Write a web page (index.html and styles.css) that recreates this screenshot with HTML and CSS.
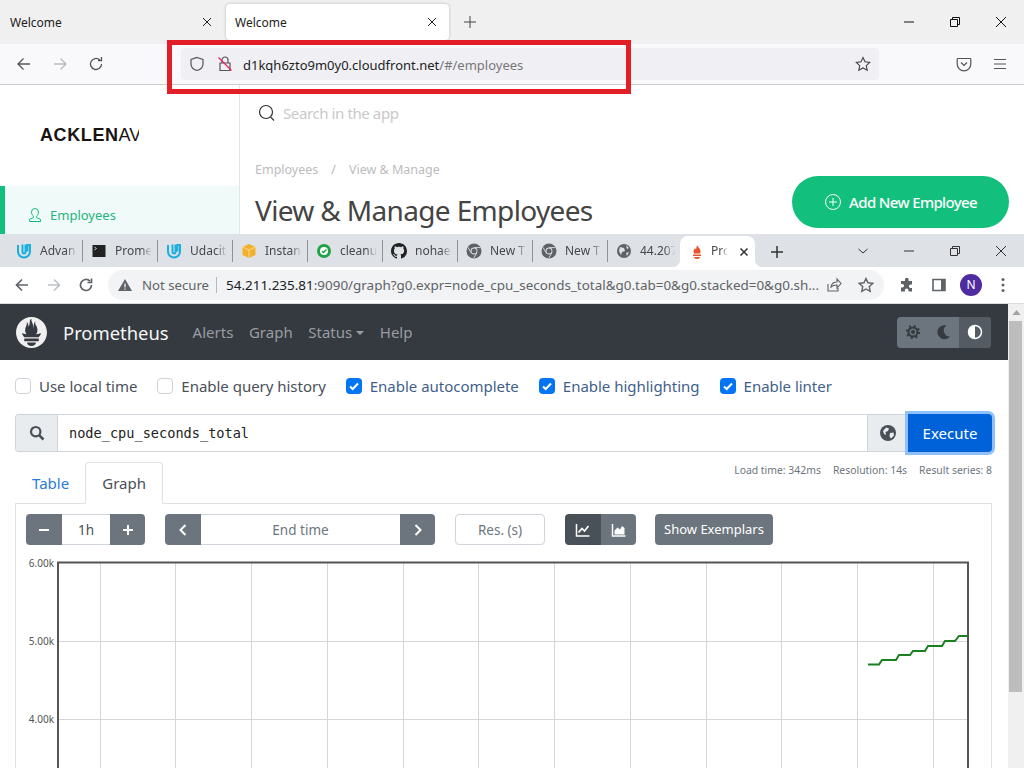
FILE: index.html
```html
<!DOCTYPE html>
<html lang="en">
<head>
    <meta charset="UTF-8">
    <meta name="viewport" content="width=device-width, initial-scale=1.0">
    <title>Prometheus Time Series Collection and Processing Server</title>
    <link rel="stylesheet" href="styles.css">
</head>
<body>
    <!-- top window: firefox -->
    <section class="ff">
        <div class="ff-tabs">
            <div class="ff-tab">
                <span>Welcome</span>
                <svg class="ico12" viewBox="0 0 12 12"><path d="M2 2l8 8M10 2l-8 8" stroke="#222" fill="none"/></svg>
            </div>
            <div class="ff-tab ff-tab-active">
                <span>Welcome</span>
                <svg class="ico12" viewBox="0 0 12 12"><path d="M2 2l8 8M10 2l-8 8" stroke="#222" fill="none"/></svg>
            </div>
            <svg class="ff-plus" viewBox="0 0 14 14"><path d="M7 1v12M1 7h12" stroke="#444" fill="none"/></svg>
            <div class="win-btns">
                <svg viewBox="0 0 12 12"><path d="M1 6h10" stroke="#111" fill="none"/></svg>
                <svg viewBox="0 0 12 12"><path d="M1.500 3.500h7v7h-7zM3.500 3.500v-2h7v7h-2" stroke="#111" fill="none"/></svg>
                <svg viewBox="0 0 12 12"><path d="M1 1l10 10M11 1l-10 10" stroke="#111" fill="none"/></svg>
            </div>
        </div>
        <div class="ff-bar">
            <svg class="ff-nav" viewBox="0 0 16 16"><path d="M14 8H2M7.500 2.500L2 8l5.500 5.500" stroke="#555" stroke-width="1.300" fill="none"/></svg>
            <svg class="ff-nav" viewBox="0 0 16 16"><path d="M2 8h12M8.500 2.500L14 8l-5.500 5.500" stroke="#bbb" stroke-width="1.300" fill="none"/></svg>
            <svg class="ff-nav" viewBox="0 0 16 16"><path d="M13.500 8a5.500 5.500 0 1 1-1.700-4M13.500 1v3.500H10" stroke="#555" stroke-width="1.300" fill="none"/></svg>
            <div class="ff-url">
                <svg class="ico16" viewBox="0 0 16 16"><path d="M8 1.500l6 2v4.500c0 3-2.500 5.500-6 6.500-3.500-1-6-3.500-6-6.500V3.500z" stroke="#555" stroke-width="1.200" fill="none"/></svg>
                <svg class="ico16" viewBox="0 0 16 16"><path d="M3 7h10v7.500H3zM5 7V4a3 3 0 0 1 6 0v3" stroke="#555" stroke-width="1.200" fill="none"/><path d="M1.500 1.500l13 13" stroke="#e0245e" stroke-width="1.200"/></svg>
                <span class="ff-url-text">d1kqh6zto9m0y0.cloudfront.net<span class="ff-url-path">/#/employees</span></span>
                <svg class="ff-star" viewBox="0 0 16 16"><path d="M8 1.500l2 4.300 4.700.6-3.400 3.200.9 4.700L8 12l-4.200 2.300.9-4.700L1.300 6.400 6 5.800z" stroke="#444" stroke-width="1.100" fill="none"/></svg>
            </div>
            <svg class="ff-pocket" viewBox="0 0 16 16"><path d="M2 2.500h12a.8.8 0 0 1 .8.800V8a6.800 6.800 0 0 1-13.600 0V3.300A.8.8 0 0 1 2 2.500z" stroke="#555" stroke-width="1.200" fill="none"/><path d="M5 6.500L8 9.500l3-3" stroke="#555" stroke-width="1.200" fill="none"/></svg>
            <svg class="ff-menu" viewBox="0 0 16 16"><path d="M2 3.500h12M2 8h12M2 12.500h12" stroke="#555" stroke-width="1.200" fill="none"/></svg>
        </div>
        <div class="app">
            <aside class="app-side">
                <div class="app-logo"><div class="app-logo-clip"><b>ACKLEN</b><span>AV</span></div></div>
                <div class="app-nav-item">
                    <svg class="ico16" viewBox="0 0 16 16"><path d="M8 1.500a3.500 3.500 0 0 1 3.500 3.500c0 2-1 3.500-2 4.200v1.300l4 1.800v2.200H2.500v-2.200l4-1.800V9.200c-1-.7-2-2.200-2-4.200A3.500 3.500 0 0 1 8 1.500z" stroke="#13bf7c" fill="none"/></svg>
                    <span>Employees</span>
                </div>
            </aside>
            <div class="app-main">
                <div class="app-search">
                    <svg class="ico18" viewBox="0 0 18 18"><circle cx="8" cy="8" r="6.500" stroke="#333" stroke-width="1.200" fill="none"/><path d="M12.500 12.800L16 16.500" stroke="#333" stroke-width="1.200"/></svg>
                    <span>Search in the app</span>
                </div>
                <div class="crumbs"><span>Employees</span><span>/</span><span>View &amp; Manage</span></div>
                <div class="app-head">
                    <h1>View &amp; Manage Employees</h1>
                    <div class="add-btn">
                        <svg class="ico18" viewBox="0 0 18 18"><circle cx="9" cy="9" r="7.500" stroke="#fff" fill="none"/><path d="M9 5v8M5 9h8" stroke="#fff" fill="none"/></svg>
                        <span>Add New Employee</span>
                    </div>
                </div>
            </div>
        </div>
    </section>

    <!-- red annotation drawn on the screenshot -->
    <div class="red-box"></div>

    <!-- bottom window: chrome -->
    <section class="cr">
        <div class="cr-tabs">
            <div class="cr-tab"><svg class="fav" viewBox="0 0 16 16"><path d="M2 2v6.500a6 6 0 0 0 12 0V2h-2.500v6.500M6.500 1.500V9a1.500 1.500 0 0 0 3 0V1.500" stroke="#1daee0" stroke-width="2" fill="none"/></svg><span class="cr-tab-txt">Advan</span></div>
            <div class="cr-tab"><svg class="fav" viewBox="0 0 16 16"><rect x="1.500" y="2" width="13" height="12" fill="#222"/><path d="M3.500 4l2 1.500-2 1.500" stroke="#ccc" fill="none"/></svg><span class="cr-tab-txt">Prome</span></div>
            <div class="cr-tab"><svg class="fav" viewBox="0 0 16 16"><path d="M2 2v6.500a6 6 0 0 0 12 0V2h-2.500v6.500M6.500 1.500V9a1.500 1.500 0 0 0 3 0V1.500" stroke="#1daee0" stroke-width="2" fill="none"/></svg><span class="cr-tab-txt">Udacit</span></div>
            <div class="cr-tab"><svg class="fav" viewBox="0 0 16 16"><path d="M8 1l6.500 3v8L8 15l-6.500-3V4z" fill="#f3b02c"/><path d="M1.500 4L8 7l6.500-3M8 7v8" stroke="#fbd98a" fill="none"/></svg><span class="cr-tab-txt">Instanc</span></div>
            <div class="cr-tab"><svg class="fav" viewBox="0 0 16 16"><circle cx="8" cy="8" r="7" fill="#1fa24a"/><circle cx="8" cy="8" r="4" fill="#fff"/><path d="M6 8l1.500 1.500L10.500 6.500" stroke="#1fa24a" stroke-width="1.500" fill="none"/></svg><span class="cr-tab-txt">cleanu</span></div>
            <div class="cr-tab"><svg class="fav" viewBox="0 0 16 16"><path fill="#222" d="M8 0C3.580 0 0 3.580 0 8c0 3.540 2.290 6.530 5.470 7.590.4.070.55-.17.55-.38 0-.19-.01-.82-.01-1.490-2.010.37-2.530-.49-2.690-.94-.09-.23-.48-.94-.82-1.130-.28-.15-.68-.52-.01-.53.63-.01 1.080.58 1.230.82.720 1.210 1.870.87 2.330.66.070-.52.280-.87.510-1.070-1.780-.2-3.640-.89-3.640-3.950 0-.87.310-1.590.82-2.150-.08-.2-.36-1.020.08-2.120 0 0 .67-.21 2.200.82.640-.18 1.320-.27 2-.27s1.360.09 2 .27c1.530-1.040 2.200-.82 2.200-.82.440 1.100.16 1.920.08 2.120.51.560.82 1.270.82 2.150 0 3.070-1.870 3.750-3.650 3.950.29.250.54.730.54 1.480 0 1.070-.01 1.930-.01 2.200 0 .21.150.46.550.38A8.010 8.010 0 0 0 16 8c0-4.420-3.580-8-8-8z"/></svg><span class="cr-tab-txt">nohael</span></div>
            <div class="cr-tab"><svg class="fav" viewBox="0 0 16 16"><circle cx="8" cy="8" r="7.500" fill="#5f6368"/><path d="M8 4.600h6.200M5.100 9.700L2 4.300M10.900 9.700L7.800 15" stroke="#dee1e6" stroke-width=".9" fill="none"/><circle cx="8" cy="8" r="3.400" fill="#dee1e6"/><circle cx="8" cy="8" r="2.500" fill="#5f6368"/></svg><span class="cr-tab-txt">New T</span></div>
            <div class="cr-tab"><svg class="fav" viewBox="0 0 16 16"><circle cx="8" cy="8" r="7.500" fill="#5f6368"/><path d="M8 4.600h6.200M5.100 9.700L2 4.300M10.900 9.700L7.800 15" stroke="#dee1e6" stroke-width=".9" fill="none"/><circle cx="8" cy="8" r="3.400" fill="#dee1e6"/><circle cx="8" cy="8" r="2.500" fill="#5f6368"/></svg><span class="cr-tab-txt">New T</span></div>
            <div class="cr-tab cr-tab-last"><svg class="fav" viewBox="0 0 16 16"><circle cx="8" cy="8" r="7" fill="#5f6368"/><path d="M4 4l4 1 1 3-3 1-1 3-2-4zM10 2l3 3-2 1zM10 10l3-1-2 4z" fill="#dee1e6"/></svg><span class="cr-tab-txt">44.207</span></div>
            <div class="cr-tab-active">
                <svg class="fav" viewBox="0 0 16 16"><path d="M8 1c.5 2 3.500 3 3.500 6.500 0 .8-.2 1.400-.5 2H5c-.3-.6-.5-1.200-.5-2C4.500 6 5.500 5 6 4c.3.800.7 1.200 1 1.500C7.500 4 7.500 2.500 8 1z" fill="#e6522c"/><path d="M4 10.500h8v1.500H4zM5 13h6c0 1-1.300 2-3 2s-3-1-3-2z" fill="#e6522c"/></svg>
                <span class="cr-tab-txt cr-tab-txt-short">Pro</span>
                <svg class="ico12 cr-close" viewBox="0 0 12 12"><path d="M2.500 2.500l7 7M9.500 2.500l-7 7" stroke="#333" stroke-width="1.500" fill="none"/></svg>
            </div>
            <svg class="cr-plus" viewBox="0 0 14 14"><path d="M7 1v12M1 7h12" stroke="#333" stroke-width="1.500" fill="none"/></svg>
            <div class="cr-win">
                <svg viewBox="0 0 12 12"><path d="M1.500 4l4.500 4 4.500-4" stroke="#333" fill="none"/></svg>
                <svg viewBox="0 0 12 12"><path d="M1 6h10" stroke="#333" fill="none"/></svg>
                <svg viewBox="0 0 12 12"><path d="M1.500 3.500h7v7h-7zM3.500 3.500v-2h7v7h-2" stroke="#333" fill="none"/></svg>
                <svg viewBox="0 0 12 12"><path d="M1 1l10 10M11 1l-10 10" stroke="#333" fill="none"/></svg>
            </div>
        </div>
        <div class="cr-bar">
            <svg class="cr-nav" viewBox="0 0 16 16"><path d="M14 8H2.500M8 2.500L2.500 8 8 13.500" stroke="#5f6368" stroke-width="1.700" fill="none"/></svg>
            <svg class="cr-nav" viewBox="0 0 16 16"><path d="M2 8h11.500M8 2.500L13.500 8 8 13.500" stroke="#bdc1c6" stroke-width="1.700" fill="none"/></svg>
            <svg class="cr-nav" viewBox="0 0 16 16"><path d="M13.500 8a5.500 5.500 0 1 1-1.600-3.900M13.500 1.500v4h-4" stroke="#5f6368" stroke-width="1.700" fill="none"/></svg>
            <div class="omni">
                <svg class="ico16" viewBox="0 0 16 16"><path d="M8 2l7 12H1z" fill="#5f6368"/><path d="M8 6.500v4M8 11.500v1.200" stroke="#fff" stroke-width="1.200"/></svg>
                <span class="omni-warn">Not secure</span>
                <span class="omni-sep"></span>
                <span class="omni-url"><span class="omni-host">54.211.235.81</span>:9090/graph?g0.expr=node_cpu_seconds_total&amp;g0.tab=0&amp;g0.stacked=0&amp;g0.sh...</span>
                <svg class="omni-share" viewBox="0 0 16 16"><path d="M2 7v7h10v-3M5 10c.5-3 3-5 6-5V2l4 4.500L11 11V8c-2.500 0-4.500.5-6 2z" stroke="#5f6368" stroke-width="1.100" fill="none"/></svg>
                <svg class="omni-star" viewBox="0 0 16 16"><path d="M8 1.500l2 4.300 4.700.6-3.400 3.200.9 4.700L8 12l-4.200 2.300.9-4.700L1.300 6.400 6 5.800z" stroke="#5f6368" stroke-width="1.400" fill="none"/></svg>
            </div>
            <svg class="cr-ext" viewBox="0 0 16 16"><path d="M6 2.500a1.800 1.800 0 0 1 3.600 0V4H13v3.400h-1.300a1.800 1.800 0 0 0 0 3.600H13v3.500H9.500v-1.300a1.800 1.800 0 0 0-3.600 0v1.300H2v-4h1.300a1.800 1.800 0 0 0 0-3.600H2V4h4z" fill="#5f6368"/></svg>
            <svg class="cr-panel" viewBox="0 0 16 16"><path d="M2 2.500h12v11H2z" stroke="#5f6368" stroke-width="1.600" fill="none"/><path d="M10 2.500h4v11h-4z" fill="#5f6368"/></svg>
            <div class="avatar">N</div>
            <svg class="cr-dots" viewBox="0 0 4 16"><circle cx="2" cy="2.500" r="1.500" fill="#5f6368"/><circle cx="2" cy="8" r="1.500" fill="#5f6368"/><circle cx="2" cy="13.500" r="1.500" fill="#5f6368"/></svg>
        </div>
        <div class="cr-page">
            <div class="prom">
                <nav class="prom-nav">
                    <svg class="prom-logo" viewBox="0 0 24 24"><path fill="#f0f0f0" d="M12 0C5.373 0 0 5.372 0 12s5.373 12 12 12 12-5.373 12-12S18.627 0 12 0zm0 22.460c-1.885 0-3.414-1.260-3.414-2.814h6.828c0 1.553-1.528 2.813-3.414 2.813zm5.640-3.745H6.360v-2.046h11.280v2.046zm-.040-3.098H6.391c-.037-.043-.075-.086-.111-.130-1.155-1.401-1.427-2.133-1.690-2.879-.005-.025 1.400.287 2.395.511 0 0 .513.119 1.262.255-.720-.843-1.147-1.915-1.147-3.010 0-2.406 1.845-4.508 1.180-6.207.648.053 1.340 1.367 1.387 3.422.689-.951.977-2.690.977-3.755 0-1.103.727-2.385 1.454-2.429-.648 1.069.168 1.985.894 4.257.272.854.237 2.290.447 3.201.070-1.892.395-4.652 1.595-5.605-.529 1.200.079 2.702.494 3.424.671 1.164 1.078 2.047 1.078 3.716a4.642 4.642 0 0 1-1.110 2.996c.792-.149 1.340-.283 1.340-.283l2.573-.502s-.374 1.538-1.810 3.019z"/></svg>
                    <span class="prom-brand">Prometheus</span>
                    <a class="prom-link">Alerts</a>
                    <a class="prom-link">Graph</a>
                    <a class="prom-link">Status<i class="caret"></i></a>
                    <a class="prom-link">Help</a>
                    <div class="theme">
                        <span class="theme-btn"><svg class="ico16" viewBox="0 0 16 16"><circle cx="8" cy="8" r="4.500" stroke="#343a40" stroke-width="2" fill="none"/><circle cx="8" cy="8" r="6.200" stroke="#343a40" stroke-width="1.800" stroke-dasharray="2 2.870" fill="none"/><circle cx="8" cy="8" r="2" fill="#343a40"/></svg></span>
                        <span class="theme-btn"><svg class="ico16" viewBox="0 0 16 16"><path d="M10.500 1.500A7 7 0 1 0 14 12.500 6 6 0 0 1 10.500 1.500z" fill="#343a40"/></svg></span>
                        <span class="theme-btn theme-on"><svg class="ico16" viewBox="0 0 16 16"><circle cx="8" cy="8" r="6.500" stroke="#fff" stroke-width="1.500" fill="none"/><path d="M8 1.500a6.500 6.500 0 0 0 0 13z" fill="#fff"/></svg></span>
                    </div>
                </nav>
                <main class="prom-main">
                    <div class="opts">
                        <label class="opt"><span class="box"></span>Use local time</label>
                        <label class="opt"><span class="box"></span>Enable query history</label>
                        <label class="opt opt-on"><span class="box box-on"><svg viewBox="0 0 16 16"><path d="M4 8.500l2.700 2.500L12 5.500" stroke="#fff" stroke-width="2" fill="none"/></svg></span>Enable autocomplete</label>
                        <label class="opt opt-on"><span class="box box-on"><svg viewBox="0 0 16 16"><path d="M4 8.500l2.700 2.500L12 5.500" stroke="#fff" stroke-width="2" fill="none"/></svg></span>Enable highlighting</label>
                        <label class="opt opt-on"><span class="box box-on"><svg viewBox="0 0 16 16"><path d="M4 8.500l2.700 2.500L12 5.500" stroke="#fff" stroke-width="2" fill="none"/></svg></span>Enable linter</label>
                    </div>
                    <div class="query">
                        <span class="addon addon-l"><svg class="ico16" viewBox="0 0 16 16"><circle cx="6.700" cy="6.700" r="4.700" stroke="#495057" stroke-width="2.200" fill="none"/><path d="M10.300 10.300l4.200 4.200" stroke="#495057" stroke-width="2.600"/></svg></span>
                        <span class="query-text">node_cpu_seconds_total</span>
                        <span class="addon addon-r"><svg class="ico16" viewBox="0 0 16 16"><circle cx="8" cy="8" r="8" fill="#495057"/><path d="M3 6l3-3.500 3 1-1 2.500-2.500 1 .5 3-2-1zM10 8l3.500-.5.500 3-3 3-1.500-2z" fill="#e9ecef"/></svg></span>
                        <span class="exec">Execute</span>
                    </div>
                    <div class="tabs-row">
                        <div class="tab-link">Table</div>
                        <div class="tab-on">Graph</div>
                        <div class="stats">
                            <span>Load time: 342ms</span>
                            <span>Resolution: 14s</span>
                            <span>Result series: 8</span>
                        </div>
                    </div>
                    <div class="panel">
                        <div class="controls">
                            <div class="grp">
                                <span class="gbtn gbtn-l"><svg class="ico12" viewBox="0 0 12 12"><path d="M1 6h10" stroke="#fff" stroke-width="2"/></svg></span>
                                <span class="gfield gfield-range">1h</span>
                                <span class="gbtn gbtn-r"><svg class="ico12" viewBox="0 0 12 12"><path d="M1 6h10M6 1v10" stroke="#fff" stroke-width="2"/></svg></span>
                            </div>
                            <div class="grp">
                                <span class="gbtn gbtn-l"><svg class="ico12" viewBox="0 0 12 12"><path d="M8.500 1L3.500 6l5 5" stroke="#fff" stroke-width="2" fill="none"/></svg></span>
                                <span class="gfield gfield-time">End time</span>
                                <span class="gbtn gbtn-r"><svg class="ico12" viewBox="0 0 12 12"><path d="M3.500 1l5 5-5 5" stroke="#fff" stroke-width="2" fill="none"/></svg></span>
                            </div>
                            <span class="res">Res. (s)</span>
                            <div class="grp">
                                <span class="gbtn gbtn-l gbtn-dark"><svg class="ico16" viewBox="0 0 16 16"><path d="M1.500 2v12h13" stroke="#fff" stroke-width="1.500" fill="none"/><path d="M3.500 10.500l3.500-4 2.500 2.500 4-5" stroke="#fff" stroke-width="1.700" fill="none"/></svg></span>
                                <span class="gbtn gbtn-r"><svg class="ico16" viewBox="0 0 16 16"><path d="M1.500 2v12h13" stroke="#fff" stroke-width="1.500" fill="none"/><path d="M3.500 12.500v-4l3-3 2.500 2 2-3.500 2.500 2v6.500z" fill="#fff"/></svg></span>
                            </div>
                            <span class="exemplars">Show Exemplars</span>
                        </div>
                        <svg class="graph" viewBox="16 546 975 222">
                            <g class="grid">
                                <path d="M100.500 562V768M175.500 562V768M251.500 562V768M327.500 562V768M403.500 562V768M478.500 562V768M554.500 562V768M630.500 562V768M706.500 562V768M781.500 562V768M857.500 562V768M933.500 562V768"/>
                                <path d="M58 641.500H968M58 719.500H968"/>
                            </g>
                            <path class="plot-frame" d="M58 768V562.500H968V768"/>
                            <path class="series" d="M868 664.500H879L882 660H896L899 655H910L913 651H925L928 646H942L945 641H955L959 636H968"/>
                            <text class="tick" x="54" y="567" text-anchor="end">6.00k</text>
                            <text class="tick" x="54" y="645" text-anchor="end">5.00k</text>
                            <text class="tick" x="54" y="723" text-anchor="end">4.00k</text>
                        </svg>
                    </div>
                </main>
            </div>
            <div class="scroll">
                <svg class="scroll-arrow" viewBox="0 0 10 6"><path d="M5 0l5 6H0z" fill="#a3a3a3"/></svg>
                <div class="scroll-thumb"></div>
            </div>
        </div>
    </section>
</body>
</html>
```

FILE: styles.css
```css
html, body {
    margin: 0;
    padding: 0;
}
body {
    width: 1024px;
    height: 768px;
    overflow: hidden;
    position: relative;
    background-color: #fff;
    font-family: "Noto Sans", "Open Sans", sans-serif;
    color: #333;
}
svg {
    display: block;
    flex: none;
}
.ico12 {
    width: 12px;
    height: 12px;
}
.ico16 {
    width: 16px;
    height: 16px;
}
.ico18 {
    width: 18px;
    height: 18px;
}

/* firefox window */
.ff {
    height: 234px;
    overflow: hidden;
}
.ff-tabs {
    height: 44px;
    display: flex;
    align-items: center;
    background-color: #f0f0f0;
    font-size: 12px;
    color: #222;
}
.ff-tab {
    width: 216px;
    height: 36px;
    margin-right: 10px;
    padding: 0 10px;
    display: flex;
    align-items: center;
    justify-content: space-between;
    box-sizing: border-box;
}
.ff-tab .ico12 {
    margin-right: -7px;
}
.ff-tab-active {
    width: 223px;
    margin: 0;
    padding: 0 11px 0 9px;
    background-color: #fff;
    border-radius: 4px;
    box-shadow: 0 0 3px rgba(0, 0, 0, 0.25);
}
.ff-tab-active .ico12 {
    margin-right: 0;
}
.ff-plus {
    width: 14px;
    height: 14px;
    margin-left: 14px;
}
.win-btns {
    margin-left: auto;
    display: flex;
    gap: 34px;
    padding-right: 17px;
}
.win-btns svg {
    width: 12px;
    height: 12px;
}
.ff-bar {
    height: 40px;
    display: flex;
    align-items: center;
    background-color: #f9f9fb;
    border-bottom: 1px solid #ccc;
    padding-left: 16px;
}
.ff-nav {
    width: 16px;
    height: 16px;
    margin-right: 20px;
}
.ff-url {
    width: 698px;
    height: 32px;
    margin-left: 57px;
    padding: 0 8px;
    box-sizing: border-box;
    display: flex;
    align-items: center;
    background-color: #f0f0f4;
    border-radius: 4px;
    font-size: 13px;
    color: #222;
}
.ff-url .ico16 {
    margin-right: 12px;
}
.ff-url-text {
    margin: 2px 0 0 -2px;
}
.ff-url-path {
    color: #777;
}
.ff-star {
    width: 16px;
    height: 16px;
    margin-left: auto;
}
.ff-pocket {
    width: 16px;
    height: 16px;
    margin-left: 77px;
}
.ff-menu {
    width: 16px;
    height: 16px;
    margin-left: 20px;
}

/* employees app */
.app {
    display: flex;
    height: 149px;
}
.app-side {
    width: 240px;
    flex: none;
    box-sizing: border-box;
    border-right: 1px solid #e4e4e4;
}
.app-logo {
    height: 101px;
    padding-left: 40px;
    display: flex;
    align-items: center;
}
.app-logo-clip {
    width: 99px;
    overflow: hidden;
    white-space: nowrap;
    font-size: 18px;
    color: #1a1311;
    font-family: "Liberation Sans", sans-serif;
}
.app-logo-clip b {
    letter-spacing: 0.600px;
}
.app-logo-clip span {
    font-weight: 400;
}
.app-nav-item {
    height: 48px;
    padding: 10px 0 0 22px;
    box-sizing: border-box;
    display: flex;
    align-items: center;
    gap: 7px;
    background-color: #f0faf8;
    border-left: 5px solid #13bf7c;
    font-size: 13px;
    color: #1fb57c;
}
.app-main {
    flex: 1;
    padding: 0 15px;
}
.app-search {
    height: 56px;
    padding-left: 3px;
    display: flex;
    align-items: center;
    gap: 7px;
    font-size: 15px;
    letter-spacing: -0.400px;
    color: #c9c9c9;
}
.crumbs {
    margin-top: 17px;
    display: flex;
    gap: 13px;
    font-size: 12.500px;
    line-height: 24px;
    color: #bcbcbc;
}
.app-head {
    display: flex;
    align-items: flex-start;
    justify-content: space-between;
}
h1 {
    margin: 8px 0 0;
    font-size: 28px;
    font-weight: 400;
    letter-spacing: -0.650px;
    line-height: 40px;
    color: #444;
}
.add-btn {
    width: 217px;
    height: 52px;
    margin-top: -6px;
    display: flex;
    align-items: center;
    justify-content: center;
    gap: 7px;
    box-sizing: border-box;
    background-color: #13bf7c;
    border-radius: 26px;
    font-size: 15px;
    font-weight: 500;
    letter-spacing: -0.650px;
    color: #fff;
}

/* red annotation */
.red-box {
    position: absolute;
    left: 167px;
    top: 40px;
    width: 464px;
    height: 54px;
    box-sizing: border-box;
    border: 5px solid #e21f26;
}

/* chrome window */
.cr {
    height: 534px;
    display: flex;
    flex-direction: column;
}
.cr-tabs {
    height: 33px;
    padding-left: 8px;
    display: flex;
    align-items: flex-end;
    background-color: #dee1e6;
    font-size: 12px;
    color: #45494e;
}
.cr-tab {
    width: 75px;
    height: 22px;
    margin-bottom: 5px;
    padding-left: 8px;
    box-sizing: border-box;
    display: flex;
    align-items: center;
    gap: 8px;
    border-right: 1px solid #8f9296;
}
.cr-tab-last {
    border-right: 0;
    width: 72px;
}
.fav {
    width: 16px;
    height: 16px;
}
.cr-tab-txt {
    width: 42px;
    margin-top: -2px;
    overflow: hidden;
    white-space: nowrap;
    -webkit-mask-image: linear-gradient(to right, #000 62%, transparent 88%);
    mask-image: linear-gradient(to right, #000 62%, transparent 88%);
}
.cr-tab-txt-short {
    width: 20px;
    -webkit-mask-image: linear-gradient(to right, #000 50%, transparent 85%);
    mask-image: linear-gradient(to right, #000 50%, transparent 85%);
}
.cr-tab-active {
    width: 75px;
    height: 31px;
    padding-left: 9px;
    box-sizing: border-box;
    display: flex;
    align-items: center;
    gap: 6px;
    background-color: #fff;
    border-radius: 8px 8px 0 0;
    position: relative;
}
.cr-tab-active::before,
.cr-tab-active::after {
    content: "";
    position: absolute;
    bottom: 0;
    width: 8px;
    height: 8px;
}
.cr-tab-active::before {
    left: -8px;
    background: radial-gradient(circle at 0 0, transparent 8px, #fff 8.500px);
}
.cr-tab-active::after {
    right: -8px;
    background: radial-gradient(circle at 100% 0, transparent 8px, #fff 8.500px);
}
.cr-close {
    margin-left: 1px;
}
.cr-plus {
    width: 14px;
    height: 14px;
    margin: 0 0 8px 15px;
}
.cr-win {
    margin: 0 17px 0 auto;
    align-self: center;
    display: flex;
    gap: 34px;
}
.cr-win svg {
    width: 12px;
    height: 12px;
}
.cr-bar {
    height: 37px;
    flex: none;
    box-sizing: border-box;
    padding-left: 14px;
    display: flex;
    align-items: center;
    background-color: #fff;
    border-bottom: 1px solid #dadce0;
}
.cr-nav {
    width: 16px;
    height: 16px;
    margin-right: 16px;
}
.omni {
    width: 776px;
    height: 30px;
    margin-left: -2px;
    padding: 0 10px 0 9px;
    box-sizing: border-box;
    display: flex;
    align-items: center;
    background-color: #f1f3f4;
    border-radius: 15px;
    font-size: 13.450px;
    color: #5f6368;
    white-space: nowrap;
}
.omni-warn {
    margin-left: 9px;
    font-size: 13.200px;
}
.omni-sep {
    width: 1px;
    height: 16px;
    margin: 0 9px 0 7px;
    background-color: #b5b8bc;
}
.omni-url {
    flex: 1;
    min-width: 0;
}
.omni-host {
    color: #202124;
}
.omni-share {
    width: 16px;
    height: 16px;
    margin-left: 2px;
}
.omni-star {
    width: 16px;
    height: 16px;
    margin-left: 16px;
}
.cr-ext {
    width: 16px;
    height: 16px;
    margin-left: 15px;
}
.cr-panel {
    width: 16px;
    height: 16px;
    margin-left: 16px;
}
.avatar {
    width: 22px;
    height: 22px;
    margin-left: 13px;
    border-radius: 50%;
    background-color: #4f2ba0;
    color: #fff;
    font-size: 12px;
    line-height: 22px;
    text-align: center;
}
.cr-dots {
    width: 4px;
    height: 16px;
    margin-left: 19px;
}
.cr-page {
    flex: 1;
    min-height: 0;
    display: flex;
}
.prom {
    width: 1008px;
    flex: none;
}

/* prometheus navbar */
.prom-nav {
    height: 56px;
    padding: 0 17px 0 16px;
    box-sizing: border-box;
    display: flex;
    align-items: center;
    background-color: #343a40;
}
.prom-logo {
    width: 31px;
    height: 31px;
}
.prom-brand {
    margin: 0 24px 0 16px;
    font-size: 18.400px;
    color: #f6f6f6;
}
.prom-link {
    margin-right: 15.600px;
    font-size: 15px;
    color: #9a9da0;
}
.caret {
    display: inline-block;
    margin-left: 4px;
    vertical-align: 3px;
    border-top: 4px solid #9a9da0;
    border-left: 4px solid transparent;
    border-right: 4px solid transparent;
}
.theme {
    margin-left: auto;
    display: flex;
    height: 31px;
    border-radius: 4px;
    overflow: hidden;
    background-color: #6c757d;
}
.theme-btn {
    width: 31px;
    display: flex;
    align-items: center;
    justify-content: center;
}
.theme-on {
    width: 32px;
    background-color: #545b62;
}

/* prometheus main */
.prom-main {
    padding: 0 16px 0 15px;
}
.opts {
    height: 52px;
    margin-bottom: 2px;
    display: flex;
    align-items: center;
    gap: 20px;
}
.opt {
    display: flex;
    align-items: center;
    gap: 8px;
    font-size: 15px;
    letter-spacing: -0.020px;
    color: #495057;
}
.opt-on {
    color: #3f5f8a;
}
.box {
    width: 16px;
    height: 16px;
    box-sizing: border-box;
    border: 1px solid #ced4da;
    border-radius: 4px;
}
.box-on {
    border: 0;
    background-color: #0275f5;
}
.query {
    height: 38px;
    display: flex;
    align-items: stretch;
    box-sizing: border-box;
    border: 1px solid #ced4da;
    border-right: 0;
    border-radius: 4px;
}
.addon {
    display: flex;
    align-items: center;
    justify-content: center;
    background-color: #e9ecef;
}
.addon-l {
    width: 41px;
    border-right: 1px solid #ced4da;
    border-radius: 3px 0 0 3px;
}
.addon-r {
    width: 40px;
    border-left: 1px solid #ced4da;
}
.query-text {
    flex: 1;
    padding-left: 11px;
    font-family: "DejaVu Sans Mono", "Liberation Mono", monospace;
    font-size: 13.600px;
    line-height: 36px;
    color: #222;
}
.exec {
    width: 84px;
    margin: -1px 0;
    box-sizing: border-box;
    display: flex;
    align-items: center;
    justify-content: center;
    background-color: #0062d9;
    border-radius: 0 4px 4px 0;
    box-shadow: 0 0 0 3px #8fc0fa;
    font-size: 15px;
    color: #fff;
    position: relative;
}
.tabs-row {
    height: 52px;
    padding-top: 10px;
    box-sizing: border-box;
    display: flex;
    align-items: stretch;
    margin-bottom: -1px;
    position: relative;
}
.tab-link {
    padding: 0 16px 0 17px;
    line-height: 42px;
    font-size: 15px;
    color: #2a7ad9;
}
.tab-on {
    width: 78px;
    height: 42px;
    box-sizing: border-box;
    border: 1px solid #dee2e6;
    border-bottom: 1px solid #fff;
    border-radius: 4px 4px 0 0;
    background-color: #fff;
    text-align: center;
    line-height: 40px;
    font-size: 15px;
    color: #495057;
    position: relative;
    z-index: 1;
}
.stats {
    margin-left: auto;
    display: flex;
    gap: 12px;
    font-size: 10.400px;
    line-height: 16px;
    color: #6c757d;
}
.panel {
    height: 265px;
    box-sizing: border-box;
    border: 1px solid #dee2e6;
    border-bottom: 0;
    overflow: hidden;
}
.controls {
    margin: 10px 0 0 10px;
    display: flex;
    gap: 20px;
    height: 31px;
}
.grp {
    display: flex;
    height: 31px;
}
.gbtn {
    width: 36px;
    display: flex;
    align-items: center;
    justify-content: center;
    background-color: #6c757d;
}
.gbtn-l {
    border-radius: 4px 0 0 4px;
}
.gbtn-r {
    width: 35px;
    border-radius: 0 4px 4px 0;
}
.gbtn-dark {
    background-color: #495057;
}
.gfield {
    box-sizing: border-box;
    border-top: 1px solid #ced4da;
    border-bottom: 1px solid #ced4da;
    text-align: center;
    line-height: 30px;
    font-size: 13.500px;
    color: #6c757d;
}
.gfield-range {
    width: 48px;
    color: #495057;
}
.gfield-time {
    width: 199px;
}
.res {
    width: 90px;
    box-sizing: border-box;
    border: 1px solid #ced4da;
    border-radius: 4px;
    text-align: center;
    line-height: 30px;
    font-size: 13.500px;
    color: #6c757d;
}
.exemplars {
    width: 118px;
    margin-left: -1px;
    background-color: #6c757d;
    border-radius: 4px;
    text-align: center;
    line-height: 31px;
    font-size: 13px;
    color: #fff;
}
.graph {
    width: 975px;
    height: 222px;
    margin-top: 1px;
}
.grid path {
    stroke: #d6d6d6;
    fill: none;
}
.plot-frame {
    stroke: #555;
    stroke-width: 2;
    fill: none;
}
.series {
    stroke: #1a8020;
    stroke-width: 2;
    fill: none;
}
.tick {
    font-size: 10px;
    fill: #545454;
}
.scroll {
    flex: 1;
    background-color: #f0f0f0;
}
.scroll-arrow {
    width: 9px;
    height: 5px;
    margin: 6px auto 6px;
}
.scroll-thumb {
    height: 371px;
    margin: 0 2px 0 1px;
    background-color: #bdbdbd;
}
```
